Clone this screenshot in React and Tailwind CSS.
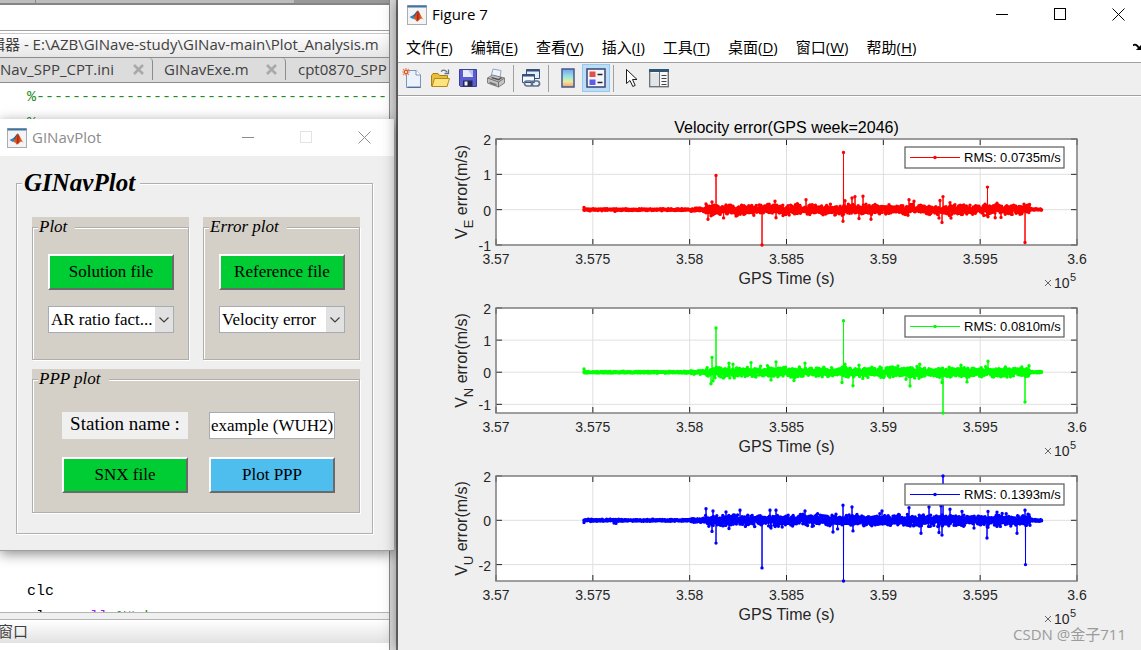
import React from 'react';

const PLOT_WIDTH = 581;

const TIME_TICKS = ['3.57', '3.575', '3.58', '3.585', '3.59', '3.595', '3.6'];

const CODE_LINES = [
  [{ text: '%' + '-'.repeat(44), className: 'text-[#228b22]' }],
  [{ text: '%', className: 'text-[#228b22]' }],
  ...Array.from({ length: 17 }, () => []),
  [{ text: 'clc', className: 'text-black' }],
  [
    { text: 'clear ', className: 'text-black' },
    { text: 'all ', className: 'text-[#a020f0]' },
    { text: '%#ok', className: 'text-[#228b22]' },
  ],
];

const MENUS = [
  ['文件', 'F'],
  ['编辑', 'E'],
  ['查看', 'V'],
  ['插入', 'I'],
  ['工具', 'T'],
  ['桌面', 'D'],
  ['窗口', 'W'],
  ['帮助', 'H'],
];

// peaks are [distance along the time axis, error in m/s]
const CHARTS = [
  {
    axis: 'E',
    title: 'Velocity error(GPS week=2046)',
    color: '#ff0000',
    rms: '0.0735',
    min: -1,
    max: 2,
    ticks: [-1, 0, 1, 2],
    height: 169,
    plotHeight: 106,
    noise: 0.13,
    quiet: 0.025,
    seed: 11,
    peaks: [
      [88, 0.06], [119, -0.05], [210, 0.16], [212, -0.27], [215, -0.17], [216, 0.22], [220, 0.97],
      [240, -0.18], [266, -1], [279, 0.24], [280, -0.23], [310, 0.28], [347, -0.33], [347.5, 1.62],
      [349, 0.25], [356, 0.33], [359, 0.37], [363, -0.25], [367, 0.38], [375, -0.27], [413, 0.28],
      [418, 0.24], [443, -0.24], [444, 0.26], [446, -0.36], [447, 0.37], [454, 0.2], [455, -0.24],
      [491.5, 0.64], [492, -0.2], [501, 0.18], [505, -0.22], [529, -0.93],
    ],
  },
  {
    axis: 'N',
    color: '#00ff00',
    rms: '0.0810',
    min: -1.27,
    max: 2,
    ticks: [-1, 0, 1, 2],
    height: 168,
    plotHeight: 105,
    noise: 0.14,
    quiet: 0.025,
    seed: 29,
    peaks: [
      [88, 0.1], [215, -0.36], [216, 0.46], [217, -0.27], [220, 1.38], [233, 0.28], [237, 0.25],
      [255, 0.3], [260, -0.15], [275, -0.24], [280, 0.32], [298, -0.26], [309, 0.28], [346, -0.32],
      [347.5, 1.6], [349, 0.25], [357, -0.42], [363, 0.22], [414, -0.43], [421, 0.18], [446, -0.32],
      [447, -1.27], [465, 0.22], [471, -0.3], [492, 0.34], [529, -0.93], [533, 0.2],
    ],
  },
  {
    axis: 'U',
    color: '#0000ff',
    rms: '0.1393',
    min: -2.74,
    max: 2,
    ticks: [-2, 0, 2],
    height: 168,
    plotHeight: 105,
    noise: 0.24,
    quiet: 0.045,
    seed: 47,
    peaks: [
      [88, -0.1], [118, -0.12], [120, -0.14], [210, 0.52], [216, -0.5], [217, 0.42], [220, -1.03],
      [230, 0.38], [233, -0.37], [244, 0.45], [266, -2.15], [274, 0.45], [275, -0.35], [280, 0.45],
      [309, 0.42], [337, -0.53], [347, 0.68], [347.5, -2.74], [356, 0.6], [357, -0.48], [386, 0.42],
      [413, 0.57], [425, -0.58], [433, 0.6], [443, -0.55], [445, 0.65], [446, -0.67], [447, 2],
      [454, 0.5], [466, 0.4], [478, -0.35], [491, -0.8], [492, 0.4], [501, 0.37], [521, -0.58],
      [529, 0.45], [529.5, -2], [533, 0.25],
    ],
  },
];

function buildSeries({ noise, quiet, seed, peaks }) {
  let state = seed;
  const random = () => {
    state = (state * 16807) % 2147483647;
    return state / 2147483647;
  };
  const points = [];
  for (let i = 0; i <= 2288; i += 1) {
    const x = 88 + i * 0.2;
    const spread = (random() + random() + random() - 1.5) / 1.5;
    let level = noise * (random() > 0.97 ? 1.6 : 1);
    if (x < 195 || x > 534) level = quiet;
    else if (x < 209) level = quiet * 2;
    points.push([x, spread * level * 1.4]);
  }
  // each peak leaves the zero line and comes straight back
  peaks.forEach(([x, value]) => {
    points.push([x - 0.1, 0], [x, value], [x + 0.1, 0]);
  });
  return points.sort((a, b) => a[0] - b[0]);
}

const Chart = ({ chart }) => {
  const { axis, title, color, rms, min, max, ticks, height, plotHeight } = chart;
  const left = 98;
  const right = left + PLOT_WIDTH;
  const top = 19;
  const bottom = top + plotHeight;
  const toY = (value) => top + ((max - value) / (max - min)) * plotHeight;
  const points = buildSeries(chart).map(([x, v]) => `${(left + x).toFixed(1)} ${toY(v).toFixed(1)}`);

  return (
    <svg
      viewBox={`0 0 743 ${height}`}
      className="block w-full font-['Liberation_Sans',sans-serif]"
      role="img"
      aria-label={`V${axis} error`}
    >
      <rect x={left} y={top} width={PLOT_WIDTH} height={plotHeight} fill="#fff" />
      {TIME_TICKS.map((label, i) => {
        const x = left + (i * PLOT_WIDTH) / 6;
        return (
          <g key={label}>
            <path d={`M${x} ${top}V${bottom}`} stroke="#dfdfdf" />
            <path d={`M${x} ${top}v6M${x} ${bottom}v-6`} stroke="#262626" />
            <text x={x} y={bottom + 19} fontSize="14" fill="#262626" textAnchor="middle">
              {label}
            </text>
          </g>
        );
      })}
      {ticks.map((tick) => (
        <g key={tick}>
          <path d={`M${left} ${toY(tick)}H${right}`} stroke="#dfdfdf" />
          <path d={`M${left} ${toY(tick)}h6M${right} ${toY(tick)}h-6`} stroke="#262626" />
          <text x={left - 5} y={toY(tick) + 6} fontSize="14" fill="#262626" textAnchor="end">
            {tick}
          </text>
        </g>
      ))}
      <rect x={left} y={top} width={PLOT_WIDTH} height={plotHeight} fill="none" stroke="#7a7a7a" strokeWidth="1.4" />

      <path d={`M${points.join('L')}`} fill="none" stroke={color} />
      <path
        d={points.map((p) => `M${p}h0`).join('')}
        fill="none"
        stroke={color}
        strokeWidth="3.4"
        strokeLinecap="round"
      />

      <rect x="507" y={top + 8} width="159" height="21" fill="#fff" stroke="#5a5a5a" strokeWidth="1.2" />
      <path d={`M512 ${top + 18.5}h50`} stroke={color} />
      <circle cx="537" cy={top + 18.5} r="1.8" fill={color} />
      <text x="566" y={top + 23} fontSize="13" fill="#000">
        {`RMS: ${rms}m/s`}
      </text>

      {title && (
        <text x={left + PLOT_WIDTH / 2} y={top - 6} fontSize="16" fill="#000" textAnchor="middle">
          {title}
        </text>
      )}
      <text x={left + PLOT_WIDTH / 2} y={bottom + 39} fontSize="16" fill="#262626" textAnchor="middle">
        GPS Time (s)
      </text>
      <path d={`M647 ${bottom + 35}l6 6m0 -6l-6 6`} stroke="#555" strokeWidth="0.9" />
      <text x="656" y={bottom + 43} fontSize="14" fill="#262626">
        10
      </text>
      <text x="672" y={bottom + 36} fontSize="11" fill="#262626">
        5
      </text>
      <text
        transform={`translate(69 ${top + plotHeight / 2}) rotate(-90)`}
        fontSize="16"
        fill="#262626"
        textAnchor="middle"
      >
        V
        <tspan dy="6" fontSize="13">
          {axis}
        </tspan>
        <tspan dy="-6"> error(m/s)</tspan>
      </text>
    </svg>
  );
};

const MatlabIcon = () => (
  <svg viewBox="0 0 20 20" className="size-5 shrink-0" aria-hidden="true">
    <defs>
      <linearGradient id="membrane" x1="0" x2="1">
        <stop offset="0" stopColor="#e8791c" />
        <stop offset="0.5" stopColor="#c8341b" />
        <stop offset="1" stopColor="#f7a531" />
      </linearGradient>
    </defs>
    <rect x="0.5" y="0.5" width="19" height="19" fill="#f3f4f6" stroke="#a9adb3" />
    <rect x="0.5" y="0.5" width="19" height="2" fill="#3f74a3" />
    <path d="M2.5 12 6.500 10 8.500 11.500 6 14Z" fill="#2f7fc4" />
    <path d="M6 10.200c2-.5 3-4.200 5-4.700L9.500 11 7.500 13.500 6 13.800 8 11.800Z" fill="#3b5a7d" />
    <path d="M11 5.500c1.700 1.500 3 6.500 6 9.500-1.800-1.300-3-1.500-4-.7-1 .8-1.600 1.700-3 2.400C9 15.200 8 14.200 6 14 8.500 12 9.500 7 11 5.500Z" fill="url(#membrane)" />
    <path d="M11 6c.5 3 .2 7-1 10.500.2-3 .2-7.500 1-10.500Z" fill="#9c1f12" />
  </svg>
);

const WindowControls = ({ color, maximizeColor }) => (
  <div className="flex items-center gap-3">
    <button type="button" aria-label="Minimize" className="flex w-[46px] justify-center">
      <svg viewBox="0 0 13 13" className="size-[13px]" fill="none" stroke={color}>
        <path d="M0 6.500h12" />
      </svg>
    </button>
    <button type="button" aria-label="Maximize" className="flex w-[46px] justify-center">
      <svg viewBox="0 0 13 13" className="size-[13px]" fill="none" stroke={maximizeColor}>
        <rect x="0.5" y="0.5" width="11" height="11" />
      </svg>
    </button>
    <button type="button" aria-label="Close" className="flex w-[46px] justify-center">
      <svg viewBox="0 0 13 13" className="size-[13px]" fill="none" stroke={color}>
        <path d="M.5 .5l12 12m0-12l-12 12" />
      </svg>
    </button>
  </div>
);

const TabClose = () => (
  <svg viewBox="0 0 11 11" className="size-[11px]" stroke="#a9a9a9" strokeWidth="2.600" aria-hidden="true">
    <path d="M1 1l9 9m0-9l-9 9" />
  </svg>
);

const Editor = () => (
  <div className="flex h-full min-w-0 flex-1 flex-col overflow-hidden bg-white font-['Open_Sans','Noto_Sans_CJK_SC',sans-serif] text-[15px] whitespace-nowrap text-[#404040]">
    <div className="flex h-[5px] shrink-0 border-b-2 border-[#858585]">
      <div className="w-9 border-r border-[#8a8a8a] bg-[#bdbdbd]" />
      <div className="w-[258px] bg-[#bdbdbd]" />
      <div className="flex-1 bg-[#999]" />
    </div>
    <div className="h-[26px] shrink-0 border-b border-[#a0a0a0]" />
    <div className="mt-[2px] flex h-6 shrink-0 items-center border-t border-[#c8c8c8] bg-linear-to-b from-white to-[#e6e6e6] pb-0.5">
      <span className="-ml-[10px]">辑器 - E:\AZB\GINave-study\GINav-main\Plot_Analysis.m</span>
    </div>
    <div className="flex h-[26px] shrink-0 border-y border-[#8c8c8c] bg-[#dcdcdc] pb-0.5">
      <div className="flex w-[153px] items-center justify-between rounded-tr border-r border-[#8c8c8c] pr-2">
        <span>Nav_SPP_CPT.ini</span>
        <TabClose />
      </div>
      <div className="flex w-[133px] items-center justify-between rounded-tr rounded-bl border-r border-[#8c8c8c] pr-2 pl-[11px]">
        <span>GINavExe.m</span>
        <TabClose />
      </div>
      <div className="flex flex-1 items-center rounded-bl pl-3">
        <span>cpt0870_SPP</span>
      </div>
    </div>
    <pre className="min-h-0 flex-1 overflow-hidden pt-0.5 pl-[27px] font-['Liberation_Mono',monospace] leading-[26px]">
      {CODE_LINES.map((line, i) => (
        <div key={i} className="h-[26px]">
          {line.map((part) => (
            <span key={part.text} className={part.className}>
              {part.text}
            </span>
          ))}
        </div>
      ))}
    </pre>
    <div className="h-2 shrink-0 border-y border-[#b4b4b4] bg-[#f0f0f0]" />
    <div className="mb-[7px] flex h-[23px] shrink-0 items-center bg-linear-to-b from-white to-[#e2e2e2]">
      <span className="-ml-0.5">窗口</span>
    </div>
  </div>
);

const Panel = ({ title, className, children }) => (
  <div className="bg-[#d4cfc7]">
    <fieldset className="border border-[#aeaeae] shadow-[inset_1px_1px_0_#fff,1px_1px_0_#fff]">
      <legend className="ml-[5px] bg-[#d4cfc7] pr-2 pl-px text-[17px] leading-5 italic">{title}</legend>
      <div className={className}>{children}</div>
    </fieldset>
  </div>
);

const PushButton = ({ className, children }) => (
  <button
    type="button"
    className={`h-9 w-[126px] border-2 border-t-white border-r-[#6a6a6a] border-b-[#6a6a6a] border-l-white text-[17px] leading-5 ${className}`}
  >
    {children}
  </button>
);

const DropDown = ({ label, value }) => (
  <div className="relative w-[126px]">
    <select
      aria-label={label}
      className="block h-[27px] w-full appearance-none border border-[#a5acb5] bg-white pl-0.5 text-[17px] leading-5"
    >
      <option>{value}</option>
    </select>
    <span className="pointer-events-none absolute inset-y-px right-px flex w-[18px] items-center justify-center bg-[#e1e1e1]">
      <svg viewBox="0 0 10 6" className="h-1.5 w-2.5" fill="none" stroke="#404040" strokeWidth="1.200">
        <path d="M.5 .5L5 5l4.500-4.500" />
      </svg>
    </span>
  </div>
);

const PlotWindow = () => (
  <section className="absolute top-[119px] left-0 w-[394px] border-b border-[#a0a0a0] bg-[#efefef] shadow-[0_3px_12px_rgba(0,0,0,0.45)]">
    <header className="flex h-[37px] items-center bg-white pr-[7px] pl-[7px]">
      <MatlabIcon />
      <h2 className="ml-[5px] flex-1 font-['Open_Sans',sans-serif] text-[15px] text-[#8c8c8c]">GINavPlot</h2>
      <WindowControls color="#8c8c8c" maximizeColor="#e3e3e3" />
    </header>
    <div className="px-4 pt-3 pr-[21px] pb-4 font-['Liberation_Serif',serif] text-black">
      <fieldset className="border border-[#b0b0b0] shadow-[inset_1px_1px_0_#fff,1px_1px_0_#fff]">
        <legend className="ml-[5px] bg-[#efefef] pr-[5px] pl-0.5 text-[25px] leading-[30px] font-bold italic">
          GINavPlot
        </legend>
        <div className="flex flex-col gap-[9px] pt-[19px] pr-3 pb-5 pl-[15px]">
          <div className="grid grid-cols-2 gap-[14px]">
            <Panel title="Plot" className="flex flex-col gap-4 pt-[17px] pb-[26px] pl-[15px]">
              <PushButton className="bg-[#00cc33]">Solution file</PushButton>
              <DropDown label="Plot type" value="AR ratio fact..." />
            </Panel>
            <Panel title="Error plot" className="flex flex-col gap-4 pt-[17px] pb-[26px] pl-[15px]">
              <PushButton className="bg-[#00cc33]">Reference file</PushButton>
              <DropDown label="Error plot type" value="Velocity error" />
            </Panel>
          </div>
          <Panel title="PPP plot" className="grid grid-cols-[126px_126px] gap-x-[21px] gap-y-[18px] pt-[23px] pb-[19px] pl-[29px]">
            <label htmlFor="station" className="h-[27px] bg-[#f0f0f0] text-center text-[19px] leading-6">
              Station name :
            </label>
            <input
              id="station"
              type="text"
              defaultValue="example (WUH2)"
              className="h-[27px] w-full border border-[#a5acb5] bg-white pl-px text-[17px] leading-5"
            />
            <PushButton className="bg-[#00cc33]">SNX file</PushButton>
            <PushButton className="bg-[#4dbeee]">Plot PPP</PushButton>
          </Panel>
        </div>
      </fieldset>
    </div>
  </section>
);

const ToolButton = ({ label, className = '', children }) => (
  <button type="button" aria-label={label} className={`flex h-7 w-7 items-center justify-center ${className}`}>
    <svg viewBox="0 0 20 20" className="size-5 shrink-0" fill="none">
      {children}
    </svg>
  </button>
);

const Separator = () => <span className="mx-[3px] h-[27px] w-px bg-[#a0a0a0]" />;

const Toolbar = () => (
  <div className="flex h-[34px] items-center border-y border-[#a0a0a0] bg-[#efefef] pb-0.5">
    <ToolButton label="New figure">
      <path d="M4.500 2.500h10l4 4v13h-14z" fill="#eaf2fc" stroke="#7f95b8" />
      <path d="M14 2v5h5" fill="#fff" stroke="#7f95b8" />
      <path d="M5.500 19.300h13" stroke="#4f6c9c" strokeWidth="1.400" />
      <path d="M0 4h8M4 0v8M1 1l6 6m0-6l-6 6" stroke="#e8876a" strokeWidth="1.200" />
      <circle cx="4" cy="4" r="1.800" fill="#ffe27a" stroke="#d9482b" />
    </ToolButton>
    <ToolButton label="Open">
      <path d="M1.500 18V7.500l1.500-2h5l1.500 2h8V18z" fill="#e9bd3c" stroke="#a97e14" />
      <path d="M2 18.500l2.500-8h15l-2.500 8z" fill="#fde47c" stroke="#b58a1c" />
      <path d="M11 3.500c3-2.500 5-1 6 .8M18.500 1.500v4h-4" stroke="#63748a" strokeWidth="1.300" />
    </ToolButton>
    <ToolButton label="Save">
      <path d="M1.500 1.500h17v17h-16l-1-1z" fill="#5a5fcf" stroke="#3b3f9c" />
      <path d="M5 2h10v7H5z" fill="#e8ecfa" />
      <path d="M10 2h5v7z" fill="#b9c4ee" />
      <path d="M5 12.500h9.500v6H5z" fill="#23264f" />
      <path d="M6.500 13.500h3v4h-3z" fill="#f1f3ff" />
    </ToolButton>
    <ToolButton label="Print">
      <path d="M7 1l8 1.500-1 8-9-2z" fill="#eef4fd" stroke="#91a5c4" />
      <path d="M1.500 10l5-3 12 3v5l-6 4-11-4z" fill="#c4c4c4" stroke="#808080" />
      <path d="M1.500 10l11 4 6-4M12.500 14v5" stroke="#6f6f6f" />
      <path d="M3.500 13.500l7 2.500v2l-7-2.500z" fill="#777" />
      <path d="M5.500 9.500l7 2.200 3-2" stroke="#555" strokeWidth="1.400" />
    </ToolButton>
    <Separator />
    <ToolButton label="Link plot">
      <path d="M5.500 1.500h13v9h-13z" fill="#e4edf8" stroke="#34507e" />
      <path d="M5.500 2.500h13" stroke="#34507e" strokeWidth="2" />
      <path d="M1.500 6.500h12v8h-12z" fill="#f5f8fc" stroke="#34507e" />
      <path d="M1.500 7.500h12" stroke="#34507e" strokeWidth="2" />
      <rect x="3.500" y="13" width="8" height="5" rx="2.500" stroke="#5d7191" strokeWidth="1.700" />
      <rect x="10.500" y="13" width="8" height="5" rx="2.500" stroke="#5d7191" strokeWidth="1.700" />
    </ToolButton>
    <Separator />
    <ToolButton label="Insert colorbar" className="ml-0.5">
      <defs>
        <linearGradient id="colorbar" x1="0" y1="0" x2="0" y2="1">
          <stop offset="0" stopColor="#7a9cf0" />
          <stop offset="0.400" stopColor="#93e3e4" />
          <stop offset="0.700" stopColor="#eeeaa0" />
          <stop offset="1" stopColor="#f0a070" />
        </linearGradient>
      </defs>
      <rect x="4" y="1" width="12" height="18" fill="url(#colorbar)" stroke="#44598a" strokeWidth="1.500" />
    </ToolButton>
    <ToolButton label="Insert legend" className="border border-[#90c8f6] bg-[#c0dcf3]">
      <rect x="1" y="1" width="18" height="18" fill="#f4f6fb" stroke="#3f4f7d" strokeWidth="1.600" />
      <rect x="3.500" y="3.500" width="6" height="5.500" fill="#e2504b" />
      <rect x="3.500" y="11.500" width="6" height="5.500" fill="#5a5fe8" />
      <path d="M11.500 6.500h5M11.500 14.500h5" stroke="#222" strokeWidth="1.400" />
    </ToolButton>
    <Separator />
    <ToolButton label="Edit plot">
      <path d="M5.500 1.500v14l3.500-3 2.800 6 2.400-1.100-2.700-5.900h4.500z" fill="#fff" stroke="#1b1b1b" />
    </ToolButton>
    <ToolButton label="Open property inspector">
      <rect x="0.700" y="1.700" width="18.600" height="17" fill="#f7f7f7" stroke="#6d7277" strokeWidth="1.400" />
      <path d="M0 2.500h20" stroke="#2f5673" strokeWidth="3" />
      <path d="M2 5h8v13H2z" fill="#e2e5e8" />
      <path d="M10.500 4v15" stroke="#6d7277" />
      <path d="M12.500 7.500h5M12.500 10.500h5M12.500 13.500h5M12.500 16.500h5" stroke="#444" strokeWidth="1.200" />
    </ToolButton>
  </div>
);

const FigureWindow = () => (
  <section className="relative flex min-w-0 flex-1 flex-col bg-[#efefef] shadow-[0_0_14px_rgba(0,0,0,0.5)]">
    <header className="flex h-[29px] shrink-0 items-center bg-white pl-[9px] font-['Open_Sans',sans-serif]">
      <MatlabIcon />
      <h1 className="ml-[5px] flex-1 text-[15px] text-black">Figure 7</h1>
      <WindowControls color="#000" maximizeColor="#000" />
    </header>
    <nav className="flex h-[33px] shrink-0 items-center gap-[18px] bg-white pt-0.5 pl-2 font-['Open_Sans','Noto_Sans_CJK_SC',sans-serif] text-[15px] leading-5 whitespace-nowrap text-black">
      {MENUS.map(([name, key]) => (
        <button key={key} type="button">
          {name}(<span className="underline underline-offset-2">{key}</span>)
        </button>
      ))}
      <svg viewBox="0 0 8 8" className="ml-auto size-2 shrink-0" fill="none" stroke="#000" aria-hidden="true">
        <path d="M0 2.500C2 .5 4 2 6 5" strokeWidth="1.800" />
        <path d="M8 2v5H3z" fill="#000" stroke="none" />
      </svg>
    </nav>
    <Toolbar />
    <div className="min-h-0 flex-1 overflow-hidden border-t border-white pt-[23px]">
      {CHARTS.map((chart) => (
        <Chart key={chart.axis} chart={chart} />
      ))}
    </div>
    <p className="absolute right-[15px] bottom-1.5 font-['Open_Sans','Noto_Sans_CJK_SC',sans-serif] text-[15px] leading-5 text-[#9b9b9b]">
      CSDN @金子711
    </p>
  </section>
);

const App = () => (
  <main className="flex h-screen overflow-hidden bg-white">
    <div className="relative flex w-[398px] shrink-0">
      <Editor />
      <div className="w-[9px] shrink-0 border-r-2 border-l border-r-[#757575] border-l-[#8c8c8c] bg-[#dcdcdc]" />
      <PlotWindow />
    </div>
    <FigureWindow />
  </main>
);

export default App;
